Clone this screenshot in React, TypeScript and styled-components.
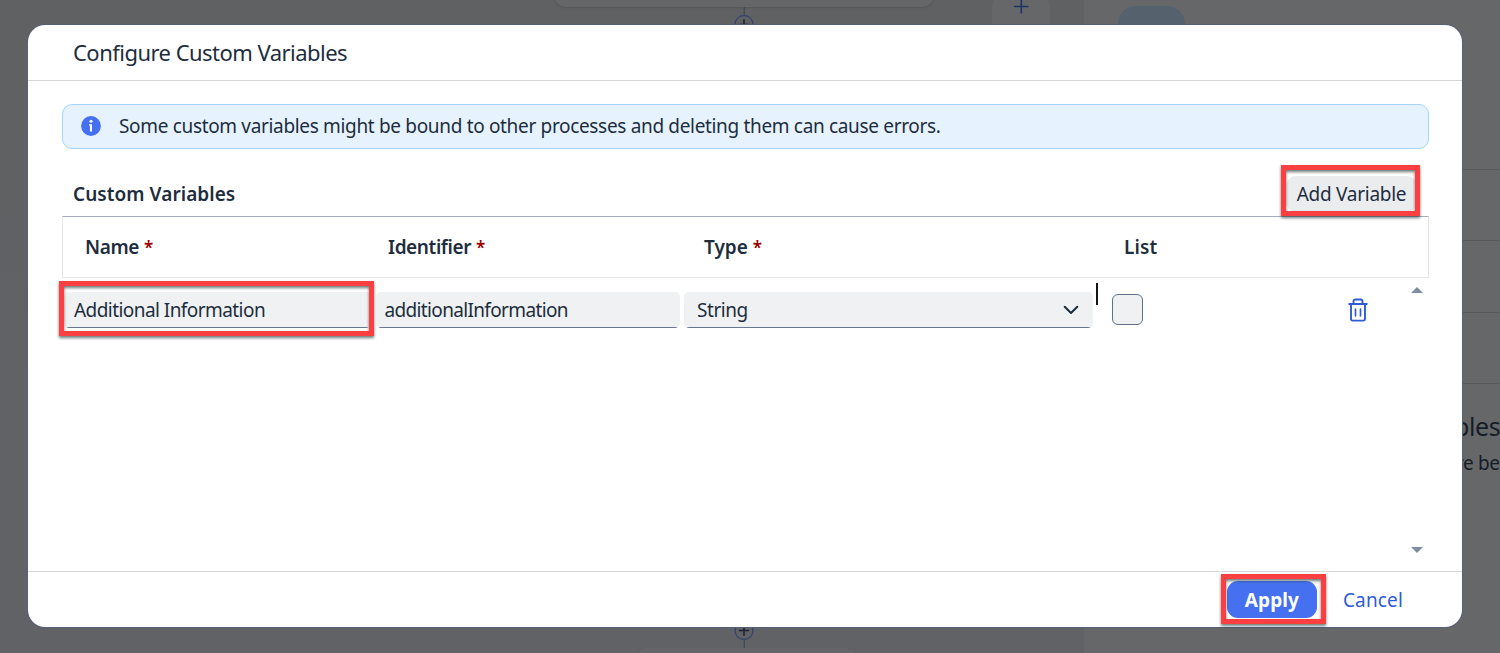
import React from "react";
import styled, { createGlobalStyle } from "styled-components";

const GlobalStyle = createGlobalStyle`
  * { box-sizing: border-box; }
  body {
    margin: 0;
    overflow: hidden;
    font-family: "Noto Sans", "Open Sans", sans-serif;
    font-size: 19px;
    color: #1d2d3e;
  }
`;

const Page = styled.div`
  position: relative;
  display: flex;
  width: 1500px;
  height: 653px;
  overflow: hidden;
  background: #616263;
`;

const Canvas = styled.div`
  position: relative;
  flex: 0 0 1084px;
  overflow: hidden;
  background: linear-gradient(to bottom, #606162, #616266 60%, #606265);
`;

const FlowNode = styled.div<{ $x: number; $y: number; $w: number }>`
  position: absolute;
  left: ${(p) => p.$x}px;
  top: ${(p) => p.$y}px;
  width: ${(p) => p.$w}px;
  height: 48px;
  border-radius: 12px;
  background: #656668;
  box-shadow: 0 1px 2px #555658;
`;

const Connector = styled.svg<{ $y: number }>`
  position: absolute;
  left: 732px;
  top: ${(p) => p.$y}px;
`;

const CanvasAction = styled.div`
  position: absolute;
  left: 992px;
  top: -12px;
  width: 58px;
  height: 70px;
  padding-top: 8px;
  border-radius: 20px;
  background: #666769;
  text-align: center;
  line-height: 0;
`;

const SidePanel = styled.div`
  flex: 1;
  display: flex;
  flex-direction: column;
  background: #666769;
  overflow: hidden;
`;

const PanelTop = styled.div`
  height: 169px;
  padding: 6px 0 0 34px;
`;

const Avatar = styled.div`
  width: 67px;
  height: 60px;
  border-radius: 18px;
  background: #55626e;
`;

const PanelRow = styled.div`
  height: 71.3px;
  border-top: 1px solid #56585a;
`;

const PanelText = styled.div<{ $size: number; $left: number; $lh: number }>`
  padding-left: ${(p) => p.$left}px;
  font-size: ${(p) => p.$size}px;
  line-height: ${(p) => p.$lh}px;
  letter-spacing: -0.4px;
  color: #151d27;
  white-space: nowrap;
`;

const PanelFooter = styled.div`
  padding-top: 23px;
  border-top: 1px solid #56585a;
`;

const Overlay = styled.div`
  position: absolute;
  inset: 0;
  display: flex;
  padding: 25px 38px 26px 28px;
`;

const Dialog = styled.div`
  flex: 1;
  display: flex;
  flex-direction: column;
  border-radius: 17px;
  background: #fff;
  box-shadow: 0 0 0 1px #566076;
`;

const DialogHeader = styled.div`
  display: flex;
  align-items: center;
  height: 56px;
  padding: 0 45px 1px;
  border-bottom: 1px solid #d6d6d6;
`;

const Label = styled.span<{ $ls?: number; $size?: number; $weight?: number; $color?: string }>`
  white-space: nowrap;
  font-size: ${(p) => p.$size ?? 19}px;
  font-weight: ${(p) => p.$weight ?? 400};
  letter-spacing: ${(p) => p.$ls ?? 0}px;
  color: ${(p) => p.$color ?? "#1d2d3e"};
  line-height: 26px;
`;

const DialogBody = styled.div`
  flex: 1;
  display: flex;
  flex-direction: column;
  padding: 23px 33px 0 34px;
`;

const Banner = styled.div`
  display: flex;
  align-items: center;
  gap: 18px;
  height: 45px;
  padding: 0 0 1px 18px;
  border: 1px solid #a3d4fb;
  border-radius: 10px;
  background: #e6f3ff;
`;

const Toolbar = styled.div`
  display: flex;
  align-items: center;
  justify-content: space-between;
  height: 67px;
  padding: 22px 12px 0 11px;
`;

const AddButton = styled.button`
  position: relative;
  display: flex;
  align-items: center;
  justify-content: center;
  width: 131px;
  height: 36px;
  padding: 0;
  border: 0;
  border-radius: 10px;
  background: #ebecee;
  font-family: inherit;
`;

const Highlight = styled.span<{ $t: number; $r: number; $b: number; $l: number }>`
  position: absolute;
  top: ${(p) => -p.$t}px;
  right: ${(p) => -p.$r}px;
  bottom: ${(p) => -p.$b}px;
  left: ${(p) => -p.$l}px;
  border: 5px solid #fc3f41;
  filter: drop-shadow(0 2px 1.5px rgba(30, 50, 50, 0.65));
  pointer-events: none;
`;

const TableHead = styled.div`
  display: grid;
  grid-template-columns: 303px 316px 420px 1fr;
  align-items: center;
  height: 62px;
  padding-left: 22px;
  border: 1px solid #e6e7e8;
  border-top-color: #a4adb9;
`;

const Required = styled.span`
  margin-left: 5px;
  font-size: 17px;
  line-height: 1;
  color: #a00000;
`;

const TableBody = styled.div`
  flex: 1;
  display: flex;
  justify-content: space-between;
  padding: 5px 6px 18px 2px;
`;

const Row = styled.div`
  display: flex;
  align-items: flex-start;
`;

const Field = styled.div<{ $w: number; $pad: number; $gap: number }>`
  position: relative;
  display: flex;
  align-items: center;
  justify-content: space-between;
  width: ${(p) => p.$w}px;
  height: 36px;
  margin: 9px ${(p) => p.$gap}px 0 0;
  padding: 0 14px 0 ${(p) => p.$pad}px;
  border-radius: 5px;
  background:
    linear-gradient(#6a778b, #6a778b) 2px 100% / calc(100% - 4px) 1px no-repeat,
    #eff1f2;
`;

const Caret = styled.span`
  width: 2px;
  height: 22px;
  margin: 0 14px 0 0;
  background: #111418;
`;

const Checkbox = styled.span`
  width: 31px;
  height: 31px;
  margin: 11px 205px 0 0;
  border: 1px solid #617087;
  border-radius: 6px;
  background: #eff1f2;
`;

const DeleteIcon = styled.svg`
  margin-top: 15px;
`;

const ScrollTrack = styled.div`
  display: flex;
  flex-direction: column;
  justify-content: space-between;
`;

const DialogFooter = styled.div`
  display: flex;
  align-items: center;
  justify-content: flex-end;
  gap: 26px;
  height: 56px;
  padding-right: 59px;
  border-top: 1px solid #d6d8da;
`;

const ApplyButton = styled.button`
  position: relative;
  display: flex;
  align-items: center;
  justify-content: center;
  width: 90px;
  height: 37px;
  padding: 0;
  border: 0;
  border-radius: 11px;
  background: #4571f0;
  font-family: inherit;
`;

function PlusConnector({ y }: { y: number }) {
  return (
    <Connector $y={y} width="24" height="36" viewBox="0 0 24 36" fill="none">
      <path d="M12.3 0V8M12.3 27V36" stroke="#3c465e" strokeWidth="1.2" />
      <circle cx="12" cy="17.5" r="9" stroke="#36436b" strokeWidth="1.3" />
      <path d="M12 12.3V22.7M6.8 17.5H17.2" stroke="#1c2330" strokeWidth="1.6" />
    </Connector>
  );
}

export default function App() {
  return (
    <>
      <GlobalStyle />
      <Page>
        <Canvas>
          <FlowNode $x={554} $y={-41} $w={380} />
          <PlusConnector y={7} />
          <PlusConnector y={613} />
          <FlowNode $x={636} $y={648} $w={220} />
          <CanvasAction>
            <svg width="18" height="20" viewBox="0 0 18 20" fill="none">
              <path d="M9.3 3V17.5M2.1 10.5H16.5" stroke="#1f3265" strokeWidth="1.6" />
            </svg>
          </CanvasAction>
        </Canvas>
        <SidePanel>
          <PanelTop>
            <Avatar />
          </PanelTop>
          <PanelRow />
          <PanelRow />
          <PanelRow />
          <PanelFooter>
            <PanelText $size={25} $left={370} $lh={39}>bles</PanelText>
            <PanelText $size={19} $left={372} $lh={34}>re be</PanelText>
          </PanelFooter>
        </SidePanel>

        <Overlay>
          <Dialog>
            <DialogHeader>
              <Label $size={22} $ls={-0.53}>Configure Custom Variables</Label>
            </DialogHeader>
            <DialogBody>
              <Banner>
                <svg width="20" height="20" viewBox="0 0 20 20">
                  <circle cx="10" cy="10" r="9.9" fill="#4470f1" />
                  <circle cx="10" cy="5.3" r="1.5" fill="#fff" />
                  <path d="M8 8.2H11V15.6H9V9.4H8Z" fill="#fff" />
                </svg>
                <Label $ls={-0.333}>
                  Some custom variables might be bound to other processes and deleting them can cause errors.
                </Label>
              </Banner>
              <Toolbar>
                <Label $weight={600} $ls={0.05}>Custom Variables</Label>
                <AddButton>
                  <Label $ls={-0.28}>Add Variable</Label>
                  <Highlight $t={11} $r={3} $b={4} $l={5} />
                </AddButton>
              </Toolbar>
              <TableHead>
                <Label $weight={600} $ls={-0.4}>Name<Required>*</Required></Label>
                <Label $weight={600} $ls={-0.4}>Identifier<Required>*</Required></Label>
                <Label $weight={600}>Type<Required>*</Required></Label>
                <Label $weight={600} $ls={0.1}>List</Label>
              </TableHead>
              <TableBody>
                <Row>
                  <Field $w={307} $pad={10} $gap={5}>
                    <Label $ls={-0.56}>Additional Information</Label>
                    <Highlight $t={11} $r={3} $b={8} $l={5} />
                  </Field>
                  <Field $w={304} $pad={8.5} $gap={4}>
                    <Label $ls={-0.65}>additionalInformation</Label>
                  </Field>
                  <Field $w={409} $pad={13} $gap={3}>
                    <Label $ls={-0.45}>String</Label>
                    <svg width="16" height="10" viewBox="0 0 16 10" fill="none">
                      <path d="M1.7 1.7L8 8L14.3 1.7" stroke="#1d2d3e" strokeWidth="2" strokeLinecap="round" strokeLinejoin="round" />
                    </svg>
                  </Field>
                  <Caret />
                  <Checkbox />
                  <DeleteIcon width="20" height="24" viewBox="0 0 20 24" fill="none" stroke="#315bd6" strokeLinecap="round" strokeLinejoin="round">
                    <path d="M1.2 6H18.8M5.5 5.5V3.4Q5.5 1.5 7.4 1.5H12.6Q14.5 1.5 14.5 3.4V5.5M3 6.3V20.8Q3 22.6 4.8 22.6H15.2Q17 22.6 17 20.8V6.3" strokeWidth="1.9" />
                    <path d="M7.5 11.2V17.8M12.5 11.2V17.8" strokeWidth="1.7" />
                  </DeleteIcon>
                </Row>
                <ScrollTrack>
                  <svg width="12" height="14" viewBox="0 0 12 14">
                    <path d="M0 10L6 4L12 10Z" fill="#7f8ea6" />
                  </svg>
                  <svg width="12" height="6" viewBox="0 0 12 6">
                    <path d="M0 0H12L6 6Z" fill="#7f8ea6" />
                  </svg>
                </ScrollTrack>
              </TableBody>
            </DialogBody>
            <DialogFooter>
              <ApplyButton>
                <Label $weight={700} $color="#fff" $ls={0.1}>Apply</Label>
                <Highlight $t={7} $r={9} $b={6} $l={6} />
              </ApplyButton>
              <Label $color="#315bd6" $ls={0.15}>Cancel</Label>
            </DialogFooter>
          </Dialog>
        </Overlay>
      </Page>
    </>
  );
}
